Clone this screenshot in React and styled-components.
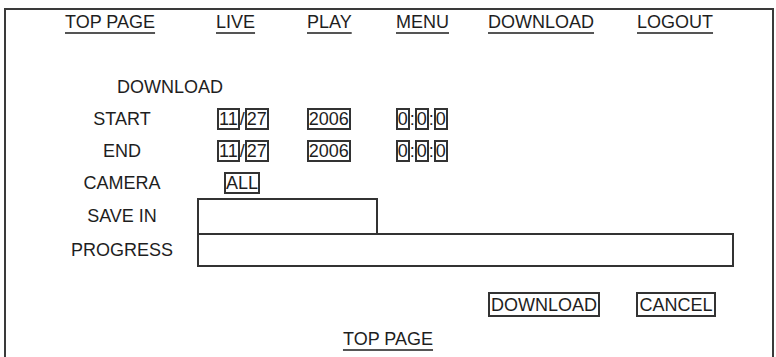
import React from "react";
import styled, { createGlobalStyle } from "styled-components";

const Global = createGlobalStyle`
  html, body { margin: 0; padding: 0; background: #fff; overflow: hidden; }
  body { font-family: "Liberation Sans", Arial, sans-serif; color: #1e1e1e; }
  * { box-sizing: border-box; }
`;

const Frame = styled.div`
  margin: 8px 0 0 4px;
  width: 770px;
  min-height: 349px;
  border: 2px solid #3a3a3a;
  border-bottom: none;
  font-size: 18px;
  line-height: 20px;
`;

const Nav = styled.nav`
  display: grid;
  grid-template-columns: 151px 91px 89px 92px 149px auto;
  padding: 2px 0 0 59px;
`;

const Link = styled.a`
  justify-self: ${(p) => (p.$center ? "center" : "start")};
  color: #1e1e1e;
  text-decoration: underline;
  text-decoration-thickness: 2px;
  text-decoration-color: #555;
  text-underline-offset: 4px;
  cursor: pointer;
`;

const Title = styled.div`
  margin: 45px 0 0 111px;
  height: 20px;
`;

const Form = styled.div`
  display: grid;
  grid-template-columns: 124px 1fr;
  column-gap: 13px;
  padding-left: 54px;
  margin-top: 11px;
`;

const Label = styled.div`
  display: flex;
  align-items: center;
  justify-content: center;
  height: ${(p) => p.$h}px;
  margin-top: ${(p) => p.$mt || 0}px;
`;

const Fields = styled.div`
  display: flex;
  align-items: center;
  height: ${(p) => p.$h}px;
  margin-top: ${(p) => p.$mt || 0}px;
`;

const Box = styled.span`
  display: inline-block;
  height: 22px;
  border: 2px solid #333;
  line-height: 18px;
  white-space: nowrap;
  margin-left: ${(p) => p.$ml || 0}px;
`;

const Sep = styled.span`
  display: inline-block;
  line-height: 18px;
`;

const SaveBox = styled.div`
  width: 181px;
  height: 35px;
  border: 2px solid #333;
  border-bottom: none;
`;

const ProgressBox = styled.div`
  width: 537px;
  height: 34px;
  border: 2px solid #333;
`;

const Buttons = styled.div`
  display: flex;
  padding-left: 482px;
  margin-top: 25px;
`;

const Button = styled.button`
  width: ${(p) => p.$w}px;
  height: 25px;
  margin-left: ${(p) => p.$ml || 0}px;
  padding: 0;
  border: 2px solid #333;
  background: #fff;
  font-family: "Liberation Sans", Arial, sans-serif;
  font-size: 18px;
  line-height: 20px;
  color: #1e1e1e;
  white-space: nowrap;
`;

const Footer = styled.div`
  display: flex;
  justify-content: center;
  margin-top: 12px;
  padding-right: 2px;
`;

const DateGroup = ({ ml }) => (
  <>
    <Box $ml={ml}>11</Box>
    <Sep>/</Sep>
    <Box>27</Box>
    <Box $ml={38}>2006</Box>
    <Box $ml={45}>0</Box>
    <Sep>:</Sep>
    <Box>0</Box>
    <Sep>:</Sep>
    <Box>0</Box>
  </>
);

export default function App() {
  const nav = ["TOP PAGE", "LIVE", "PLAY", "MENU", "DOWNLOAD", "LOGOUT"];
  return (
    <>
      <Global />
      <Frame>
        <Nav>
          {nav.map((n) => (
            <Link key={n}>{n}</Link>
          ))}
        </Nav>
        <Title>DOWNLOAD</Title>
        <Form>
          <Label $h={22}>START</Label>
          <Fields $h={22}>
            <DateGroup ml={20} />
          </Fields>
          <Label $h={22} $mt={10}>END</Label>
          <Fields $h={22} $mt={10}>
            <DateGroup ml={20} />
          </Fields>
          <Label $h={22} $mt={10}>CAMERA</Label>
          <Fields $h={22} $mt={10}>
            <Box $ml={27}>ALL</Box>
          </Fields>
          <Label $h={35} $mt={4}>SAVE IN</Label>
          <Fields $h={35} $mt={4}>
            <SaveBox />
          </Fields>
          <Label $h={34}>PROGRESS</Label>
          <Fields $h={34}>
            <ProgressBox />
          </Fields>
        </Form>
        <Buttons>
          <Button $w={112}>DOWNLOAD</Button>
          <Button $w={80} $ml={36}>CANCEL</Button>
        </Buttons>
        <Footer>
          <Link>TOP PAGE</Link>
        </Footer>
      </Frame>
    </>
  );
}
